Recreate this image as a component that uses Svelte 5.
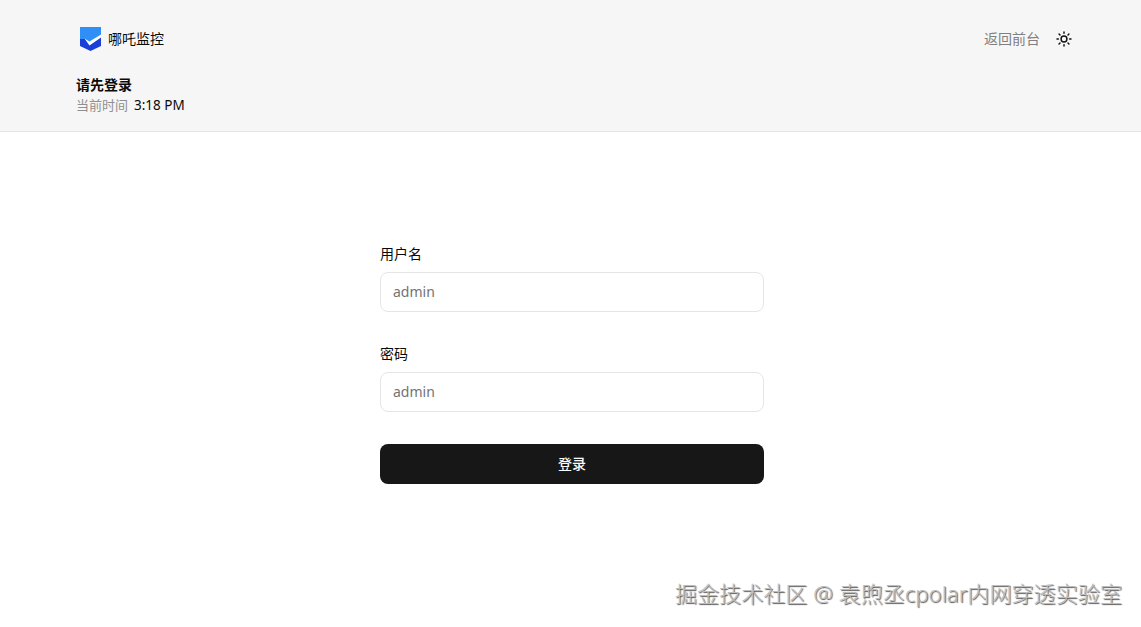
<script>
  let username = $state('');
  let password = $state('');
</script>

<div class="page">
  <header class="head">
    <div class="top">
      <div class="brand">
        <svg class="logo" viewBox="0 0 21 24" width="21" height="24" aria-hidden="true">
          <path d="M0 0H21V19L10.5 24L0 19Z" fill="#1a3ed8"/>
          <path d="M0 0H21V9L9.5 15L5 12L0 12Z" fill="#2f8ff6"/>
          <path d="M4.5 11.5L9.5 14.5L21 7.5V10.5L9.5 18.5Z" fill="#fff"/>
        </svg>
        <span class="name">哪吒监控</span>
      </div>
      <div class="actions">
        <span class="back">返回前台</span>
        <svg class="sun" viewBox="0 0 24 24" width="16" height="16" fill="none" stroke="#111" stroke-width="2.2" stroke-linecap="round" aria-hidden="true">
          <circle cx="12" cy="12" r="4.4"/>
          <path d="M12 1.5v2M12 20.5v2M1.5 12h2M20.5 12h2M4.6 4.6L6 6M18 18l1.4 1.4M4.6 19.4L6 18M18 6l1.4-1.4"/>
        </svg>
      </div>
    </div>
    <div class="status">
      <p class="title">请先登录</p>
      <p class="time"><span class="muted">当前时间</span><span class="clock">3:18 PM</span></p>
    </div>
  </header>

  <main class="main">
    <form class="form" onsubmit={(e) => e.preventDefault()}>
      <label class="field">
        <span class="label">用户名</span>
        <input class="input" placeholder="admin" bind:value={username} />
      </label>
      <label class="field">
        <span class="label">密码</span>
        <input class="input" type="password" placeholder="admin" bind:value={password} />
      </label>
      <button class="submit" type="submit">登录</button>
    </form>
  </main>

  <div class="mark">掘金技术社区 @ 袁煦丞cpolar内网穿透实验室</div>
</div>

<style>
  :global(body) {
    margin: 0;
    background: #fff;
    font-family: "Noto Sans", "Open Sans", "Noto Sans CJK SC", sans-serif;
    color: #0a0a0a;
  }
  .page {
    position: relative;
    height: 627px;
    overflow: hidden;
    background: #fff;
  }
  .head {
    box-sizing: border-box;
    height: 132px;
    padding: 27px 69px 0 76px;
    background: #f6f6f6;
    border-bottom: 1px solid #e5e5e5;
  }
  .top {
    display: flex;
    justify-content: space-between;
    align-items: center;
    height: 24px;
    margin-bottom: 24px;
  }
  .brand {
    display: flex;
    align-items: center;
    gap: 7px;
    padding-left: 4px;
  }
  .logo {
    display: block;
  }
  .name {
    font-size: 14px;
    line-height: 20px;
  }
  .actions {
    display: flex;
    align-items: center;
    gap: 16px;
  }
  .back {
    font-size: 14px;
    line-height: 20px;
    color: #808080;
  }
  .sun {
    display: block;
  }
  .status p {
    margin: 0;
    font-size: 14px;
    line-height: 20px;
  }
  .title {
    font-weight: 700;
  }
  .status .time {
    display: flex;
    gap: 6px;
    font-size: 13px;
  }
  .clock {
    font-size: 13.5px;
  }
  .muted {
    color: #8f8f8f;
  }
  .main {
    display: flex;
    justify-content: center;
    padding: 112px 377px 0 380px;
  }
  .form {
    display: flex;
    flex-direction: column;
    gap: 32px;
    width: 100%;
  }
  .field {
    display: block;
  }
  .label {
    display: block;
    font-size: 14px;
    line-height: 20px;
    margin-bottom: 8px;
  }
  .input {
    display: block;
    box-sizing: border-box;
    width: 100%;
    height: 40px;
    padding: 0 12px 2px;
    border: 1px solid #e5e5e5;
    border-radius: 8px;
    background: #fff;
    font: inherit;
    font-size: 14px;
    outline: none;
  }
  .input::placeholder {
    color: #737373;
    opacity: 1;
  }
  .submit {
    height: 40px;
    padding: 0 0 2px;
    border: 0;
    border-radius: 8px;
    background: #171717;
    color: #fafafa;
    font: inherit;
    font-size: 14px;
    font-weight: 500;
  }
  .mark {
    position: absolute;
    right: 19px;
    top: 578px;
    font-size: 22.1px;
    line-height: 30px;
    font-weight: 300;
    color: #bdbdbd;
    text-shadow: 1px 1px 1px #555;
    white-space: nowrap;
  }
</style>
